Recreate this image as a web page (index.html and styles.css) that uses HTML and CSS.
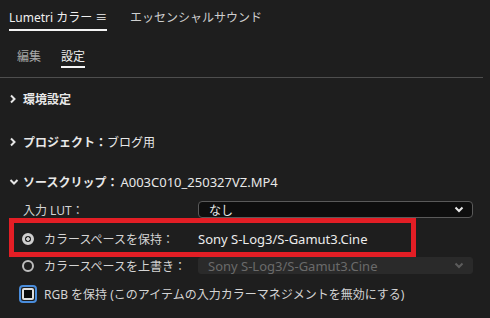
FILE: index.html
```html
<!DOCTYPE html>
<html>
<head>
    <title>Lumetri カラー</title>
    <meta charset="UTF-8">
    <meta name="viewport" content="width=device-width, initial-scale=1.0">
    <link rel="stylesheet" href="styles.css">
</head>
<body>
    <div class="panel">
        <div class="tabs">
            <div class="tab active">Lumetri カラー ≡</div>
            <div class="tab">エッセンシャルサウンド</div>
        </div>
        <div class="subtabs">
            <div class="subtab">編集</div>
            <div class="subtab active">設定</div>
        </div>
        <div class="divider"></div>

        <div class="section first">
            <svg class="chev" width="8" height="10" viewBox="0 0 8 10"><path d="M2 1.5 L5.5 5 L2 8.5" fill="none" stroke="#e6e6e6" stroke-width="2"/></svg>
            <span class="bold">環境設定</span>
        </div>
        <div class="section second">
            <svg class="chev" width="8" height="10" viewBox="0 0 8 10"><path d="M2 1.5 L5.5 5 L2 8.5" fill="none" stroke="#e6e6e6" stroke-width="2"/></svg>
            <span class="bold">プロジェクト：</span><span>ブログ用</span>
        </div>
        <div class="section third">
            <svg class="chev open" width="10" height="8" viewBox="0 0 10 8"><path d="M1.5 2 L5 5.5 L8.5 2" fill="none" stroke="#e6e6e6" stroke-width="2"/></svg>
            <span class="bold">ソースクリップ：</span><span class="latin file">A003C010_250327VZ.MP4</span>
        </div>

        <div class="row lut-row">
            <div class="label lut-label">入力 LUT：</div>
            <div class="select">
                <span>なし</span>
                <svg width="10" height="7" viewBox="0 0 10 7"><path d="M1.5 1.5 L5 5 L8.5 1.5" fill="none" stroke="#e8e8e8" stroke-width="2"/></svg>
            </div>
        </div>

        <div class="row keep-row">
            <span class="radio checked"></span>
            <div class="label radio-label">カラースペースを保持：</div>
            <div class="value latin">Sony S-Log3/S-Gamut3.Cine</div>
        </div>

        <div class="row override-row">
            <span class="radio"></span>
            <div class="label radio-label">カラースペースを上書き：</div>
            <div class="select disabled">
                <span class="latin">Sony S-Log3/S-Gamut3.Cine</span>
                <svg width="10" height="7" viewBox="0 0 10 7"><path d="M1.5 1.5 L5 5 L8.5 1.5" fill="none" stroke="#5c5c5c" stroke-width="2"/></svg>
            </div>
        </div>

        <div class="row check-row">
            <span class="checkbox"><span class="box"></span></span>
            <div class="label">RGB を保持 (このアイテムの入力カラーマネジメントを無効にする)</div>
        </div>
    </div>
</body>
</html>
```

FILE: styles.css
```css
body {
    margin: 0;
    background-color: #1e1e1e;
    color: #d6d6d6;
    font-family: "Noto Sans", "Noto Sans CJK JP", sans-serif;
    font-size: 12px;
}
.panel {
    width: 490px;
    height: 318px;
    overflow: hidden;
}
.tabs {
    display: flex;
    gap: 23px;
    padding-left: 9px;
}
.tab {
    padding: 10px 0 3px;
    line-height: 16px;
    border-bottom: 2px solid transparent;
    color: #cfcfcf;
    white-space: nowrap;
}
.tab.active {
    width: 98px;
    color: #f0f0f0;
    border-bottom-color: #f4f4f4;
}
.subtabs {
    display: flex;
    gap: 20px;
    padding-left: 17px;
    margin-top: 18px;
}
.subtab {
    line-height: 16px;
    padding-bottom: 1px;
    border-bottom: 2px solid transparent;
    color: #a8a8a8;
}
.subtab.active {
    color: #f0f0f0;
    border-bottom-color: #f4f4f4;
}
.divider {
    height: 1px;
    margin: 9px 7px 0 0;
    background-color: #4e4e4e;
}
.section {
    display: flex;
    align-items: center;
    height: 18px;
    padding-left: 9px;
    color: #e8e8e8;
    white-space: nowrap;
}
.section.first { margin-top: 12px; }
.section.second { margin-top: 25px; }
.section.third { margin-top: 22px; }
.chev {
    margin-right: 6px;
}
.chev.open {
    margin-right: 4px;
}
.bold {
    font-weight: bold;
}
.latin {
    font-size: 13px;
}
.file {
    margin-left: 2px;
}
.row {
    display: flex;
    align-items: center;
    white-space: nowrap;
}
.label {
    color: #d4d4d4;
}
.lut-row {
    height: 17px;
    margin-top: 10px;
    padding-left: 23px;
}
.lut-label {
    width: 175px;
}
.select {
    box-sizing: border-box;
    display: flex;
    align-items: center;
    justify-content: space-between;
    width: 275px;
    height: 17px;
    padding: 0 8px 0 10px;
    background-color: #0e0e0e;
    border: 1px solid #5a5a5a;
    border-radius: 4px;
    color: #e8e8e8;
}
.select.disabled {
    background-color: #2a2a2a;
    border-color: #2a2a2a;
    border-radius: 3px;
    color: #6a6a6a;
    padding-left: 9px;
}
.keep-row {
    box-sizing: border-box;
    width: 407px;
    height: 39px;
    margin: 0 0 0 9px;
    padding: 2px 0 0 8px;
    border: 5px solid #e31e25;
}
.radio {
    box-sizing: border-box;
    width: 12px;
    height: 12px;
    border: 2px solid #bdbdbd;
    border-radius: 50%;
    margin-right: 10px;
    background-color: #1e1e1e;
    flex-shrink: 0;
}
.radio.checked {
    border: 3px solid #cfcfcf;
    background-image: radial-gradient(circle, #cfcfcf 0 1.5px, transparent 2px);
}
.radio-label {
    width: 154px;
}
.value {
    color: #ececec;
}
.override-row {
    height: 17px;
    padding-left: 22px;
}
.check-row {
    height: 18px;
    margin-top: 11px;
    padding-left: 19px;
}
.checkbox {
    box-sizing: border-box;
    display: flex;
    align-items: center;
    justify-content: center;
    width: 18px;
    height: 18px;
    border: 2px solid #4a8ddc;
    border-radius: 4px;
    margin-right: 7px;
}
.box {
    box-sizing: border-box;
    width: 12px;
    height: 12px;
    border: 2px solid #dedede;
    border-radius: 2px;
    background-color: #0a0a0a;
}
```
